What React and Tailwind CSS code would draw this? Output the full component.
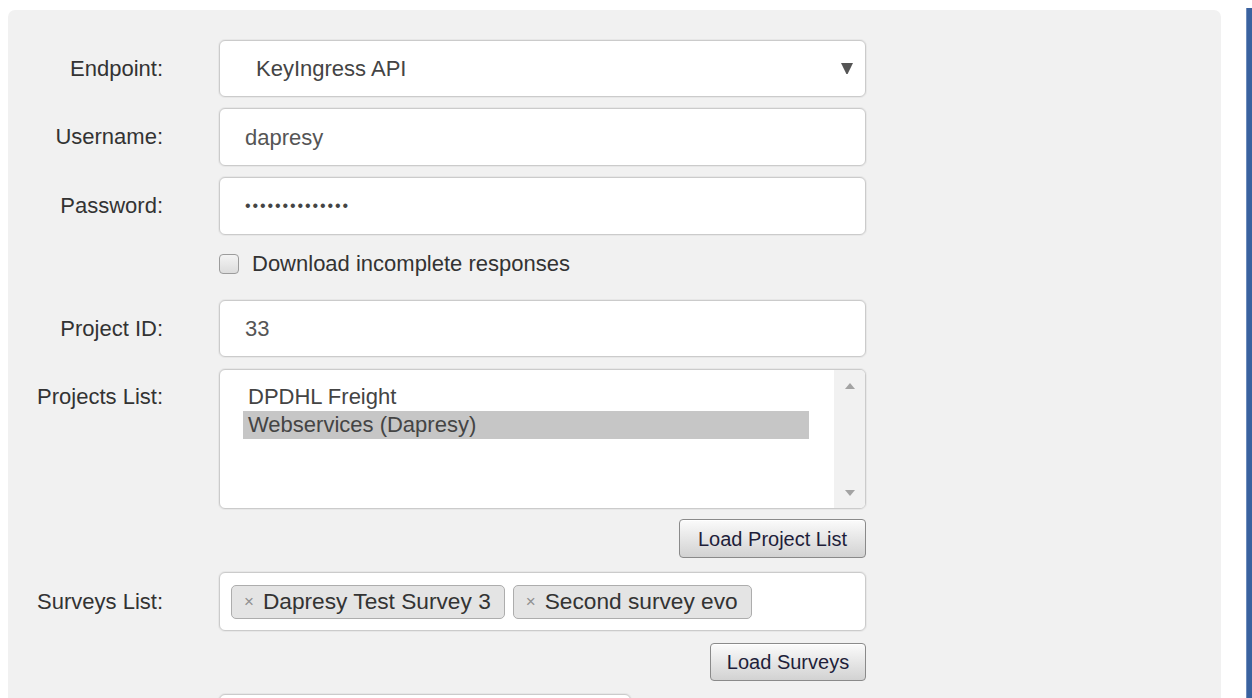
const labelCls = "w-[155px] shrink-0 text-right text-[22px] leading-none text-[#333]";
const fieldCls =
  "ml-[56px] w-[647px] rounded-[6px] border border-[#cbcbcb] bg-white shadow-[0_0_0_1px_#e7e7e7]";
const buttonCls =
  "rounded-[4px] border border-[#8a8a8a] bg-gradient-to-b from-[#fbfbfb] to-[#d2d2d2] text-[20px] leading-none text-[#1e1e3a] shadow-[inset_0_1px_0_#ffffff]";

const projects = [
  { name: "DPDHL Freight", selected: false },
  { name: "Webservices (Dapresy)", selected: true },
];

const surveys = ["Dapresy Test Survey 3", "Second survey evo"];

const Row = ({ label, children, className = "" }) => (
  <div className={`flex items-center ${className}`}>
    <div className={labelCls}>{label}</div>
    {children}
  </div>
);

const Tag = ({ text }) => (
  <div className="flex h-[34px] items-center rounded-[5px] border border-[#adadad] bg-[#e4e4e4] pl-[12px] pr-[13px]">
    <span className="mr-[9px] text-[17px] leading-none text-[#909090]">×</span>
    <span className="text-[22.7px] leading-none text-[#333]">{text}</span>
  </div>
);

const App = () => {
  return (
    <div className="flex h-[698px] overflow-hidden bg-white font-['Liberation_Sans',Arial,sans-serif]">
      <div className="ml-2 mt-[10px] w-[1213px] shrink-0 rounded-t-[7px] bg-[#f1f1f1]">
        <Row label="Endpoint:" className="mt-[30px]">
          <div className={`${fieldCls} flex h-[57px] items-center justify-between pl-[36px] pr-[12px]`}>
            <span className="text-[22px] text-[#444]">KeyIngress API</span>
            <svg width="12" height="11" viewBox="0 0 12 11">
              <path d="M0 0H12L6.6 11H5.4Z" fill="#555" />
            </svg>
          </div>
        </Row>

        <Row label="Username:" className="mt-[11px]">
          <div className={`${fieldCls} flex h-[58px] items-center pl-[25px] text-[22px] text-[#555]`}>
            dapresy
          </div>
        </Row>

        <Row label="Password:" className="mt-[11px]">
          <div className={`${fieldCls} flex h-[58px] items-center pl-[25px] text-[16px] tracking-[1.9px] text-[#444]`}>
            ••••••••••••••
          </div>
        </Row>

        <div className="ml-[211px] mt-[18px] flex items-center">
          <div className="h-[20px] w-[20px] rounded-[4px] border border-[#9c9c9c] bg-gradient-to-b from-[#f4f4f4] to-[#dcdcdc]" />
          <span className="ml-[13px] text-[22px] leading-none text-[#333]">Download incomplete responses</span>
        </div>

        <Row label="Project ID:" className="mt-[25px]">
          <div className={`${fieldCls} flex h-[57px] items-center pl-[25px] text-[22px] text-[#555]`}>33</div>
        </Row>

        <div className="mt-[12px] flex items-start">
          <div className={`${labelCls} pt-[17px]`}>Projects List:</div>
          <div className={`${fieldCls} flex h-[140px] overflow-hidden`}>
            <div className="flex-1 pl-[23px] pt-[13px]">
              {projects.map((p) => (
                <div
                  key={p.name}
                  className={`w-[566px] pl-[5px] text-[22px] leading-[28px] text-[#444] ${p.selected ? "bg-[#c6c6c6]" : ""}`}
                >
                  {p.name}
                </div>
              ))}
            </div>
            <div className="flex w-[31px] flex-col items-center justify-between bg-[#f1f1f1] pb-[12px] pt-[13px]">
              <svg width="10" height="6" viewBox="0 0 10 6">
                <path d="M5 0L10 6H0Z" fill="#a3a3a3" />
              </svg>
              <svg width="10" height="6" viewBox="0 0 10 6">
                <path d="M0 0H10L5 6Z" fill="#a3a3a3" />
              </svg>
            </div>
          </div>
        </div>

        <div className="ml-[671px] mt-[10px] flex">
          <button className={`${buttonCls} h-[39px] w-[187px]`}>Load Project List</button>
        </div>

        <Row label="Surveys List:" className="mt-[14px]">
          <div className={`${fieldCls} flex h-[59px] items-center gap-[8px] pl-[11px]`}>
            {surveys.map((s) => (
              <Tag key={s} text={s} />
            ))}
          </div>
        </Row>

        <div className="ml-[702px] mt-[12px] flex">
          <button className={`${buttonCls} h-[38px] w-[156px]`}>Load Surveys</button>
        </div>

        <div className="ml-[211px] mt-[13px] h-[60px] w-[412px] rounded-[6px] border border-[#cbcbcb] bg-white shadow-[0_0_0_1px_#e7e7e7]" />
      </div>

      <div className="ml-[25px] mt-2 h-[690px] w-[6px] shrink-0 border-l border-[#6d8cbc] bg-[#3a629f]" />
    </div>
  );
};

export default App;
